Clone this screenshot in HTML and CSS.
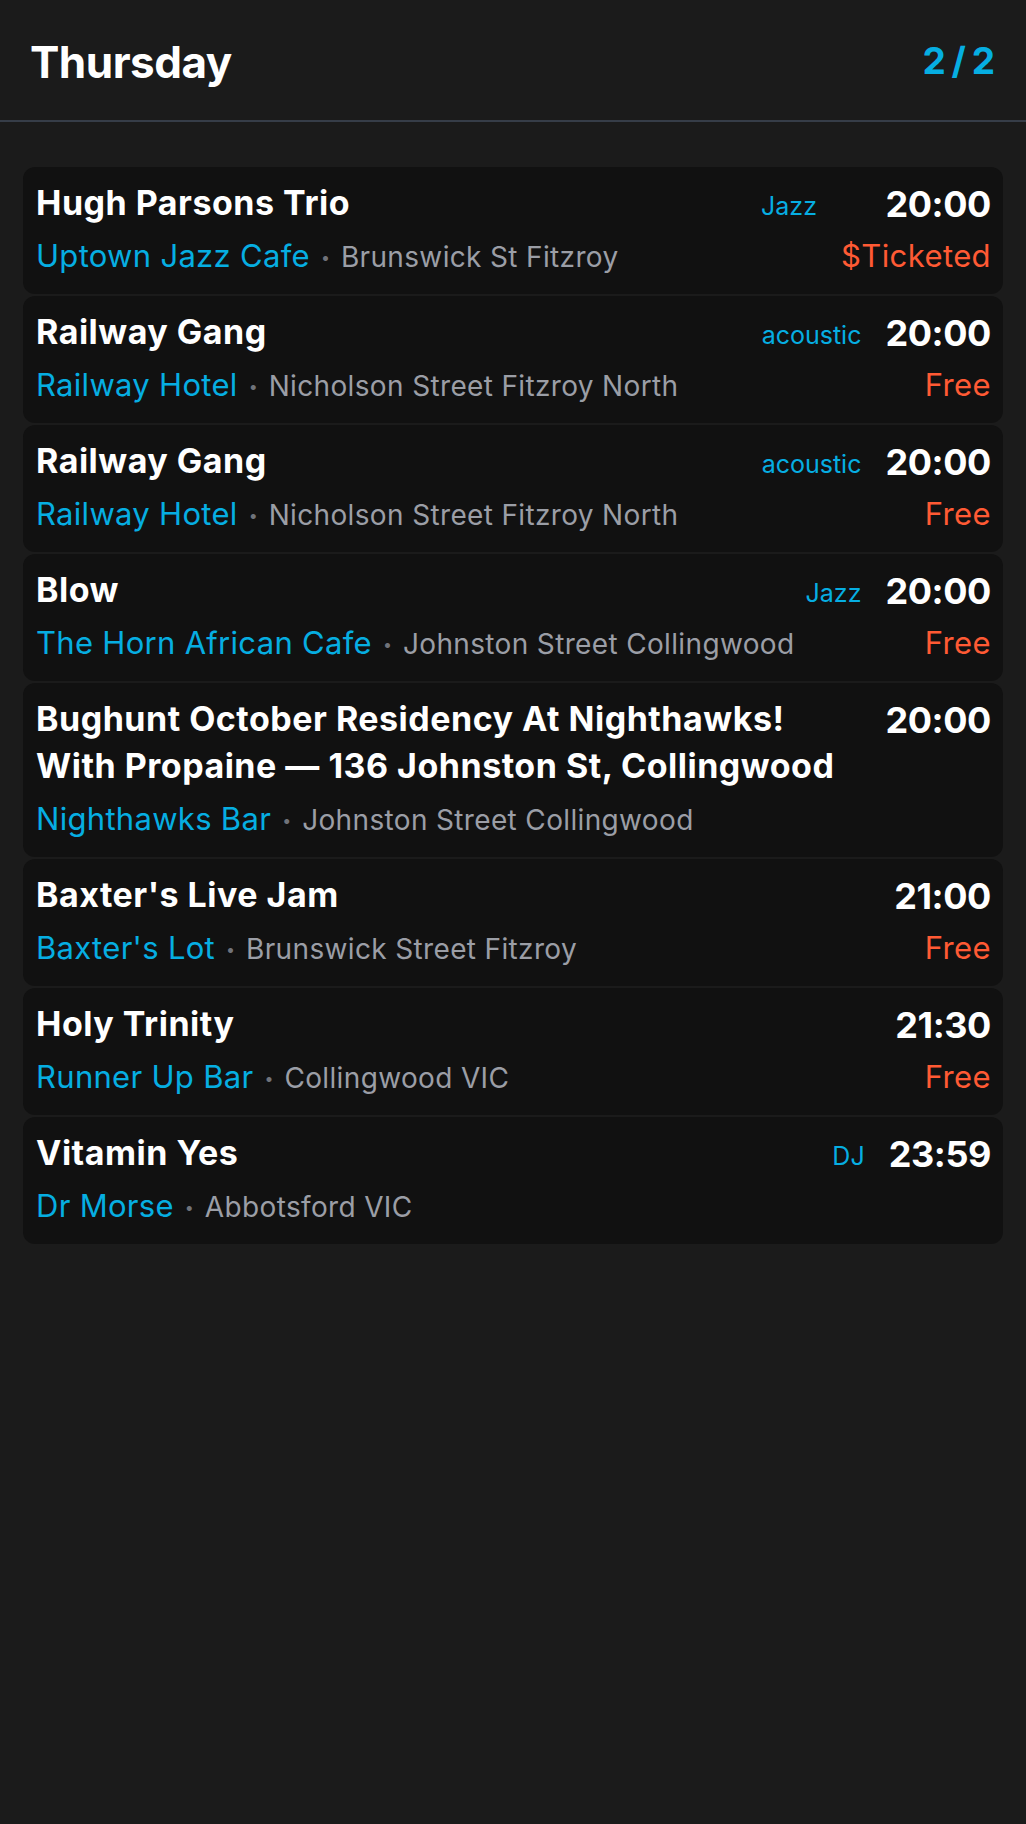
FILE: index.html
```html
<!DOCTYPE html>
<html lang="en">
<head>
<meta charset="utf-8">
<title>Thursday</title>
<link rel="stylesheet" href="styles.css">
</head>
<body>
<header class="top">
  <h1 class="day">Thursday</h1>
  <div class="pager">2 / 2</div>
</header>
<main class="list">
  <article class="card">
    <div class="main">
      <div class="head"><h2 class="title">Hugh Parsons Trio</h2><span class="genre">Jazz</span></div>
      <div class="where"><span class="venue">Uptown Jazz Cafe</span><span class="dot">•</span><span class="addr">Brunswick St Fitzroy</span></div>
    </div>
    <div class="side"><div class="time">20:00</div><div class="price">$Ticketed</div></div>
  </article>
  <article class="card">
    <div class="main">
      <div class="head"><h2 class="title">Railway Gang</h2><span class="genre">acoustic</span></div>
      <div class="where"><span class="venue">Railway Hotel</span><span class="dot">•</span><span class="addr">Nicholson Street Fitzroy North</span></div>
    </div>
    <div class="side"><div class="time">20:00</div><div class="price">Free</div></div>
  </article>
  <article class="card">
    <div class="main">
      <div class="head"><h2 class="title">Railway Gang</h2><span class="genre">acoustic</span></div>
      <div class="where"><span class="venue">Railway Hotel</span><span class="dot">•</span><span class="addr">Nicholson Street Fitzroy North</span></div>
    </div>
    <div class="side"><div class="time">20:00</div><div class="price">Free</div></div>
  </article>
  <article class="card">
    <div class="main">
      <div class="head"><h2 class="title">Blow</h2><span class="genre">Jazz</span></div>
      <div class="where"><span class="venue">The Horn African Cafe</span><span class="dot">•</span><span class="addr">Johnston Street Collingwood</span></div>
    </div>
    <div class="side"><div class="time">20:00</div><div class="price">Free</div></div>
  </article>
  <article class="card">
    <div class="main">
      <div class="head"><h2 class="title">Bughunt October Residency At Nighthawks! With Propaine — 136 Johnston St, Collingwood</h2></div>
      <div class="where"><span class="venue">Nighthawks Bar</span><span class="dot">•</span><span class="addr">Johnston Street Collingwood</span></div>
    </div>
    <div class="side"><div class="time">20:00</div></div>
  </article>
  <article class="card">
    <div class="main">
      <div class="head"><h2 class="title">Baxter's Live Jam</h2></div>
      <div class="where"><span class="venue">Baxter's Lot</span><span class="dot">•</span><span class="addr">Brunswick Street Fitzroy</span></div>
    </div>
    <div class="side"><div class="time">21:00</div><div class="price">Free</div></div>
  </article>
  <article class="card">
    <div class="main">
      <div class="head"><h2 class="title">Holy Trinity</h2></div>
      <div class="where"><span class="venue">Runner Up Bar</span><span class="dot">•</span><span class="addr">Collingwood VIC</span></div>
    </div>
    <div class="side"><div class="time">21:30</div><div class="price">Free</div></div>
  </article>
  <article class="card">
    <div class="main">
      <div class="head"><h2 class="title">Vitamin Yes</h2><span class="genre">DJ</span></div>
      <div class="where"><span class="venue">Dr Morse</span><span class="dot">•</span><span class="addr">Abbotsford VIC</span></div>
    </div>
    <div class="side"><div class="time">23:59</div></div>
  </article>
</main>
</body>
</html>
```

FILE: styles.css
```css
* { box-sizing: border-box; }
html, body {
  margin: 0;
  padding: 0;
  background: #1b1b1b;
  color: #ffffff;
  font-family: Inter, "Noto Sans", "Liberation Sans", sans-serif;
  min-height: 1824px;
}
.top {
  height: 122px;
  display: flex;
  align-items: center;
  justify-content: space-between;
  padding: 4px 31px 0 30px;
  border-bottom: 2px solid #363d48;
}
.day {
  margin: 0;
  font-size: 44px;
  font-weight: 700;
  letter-spacing: -0.5px;
}
.pager {
  font-size: 37px;
  font-weight: 700;
  color: #06aee2;
  margin-top: -4px;
  word-spacing: -3px;
}
.list {
  padding: 45px 23px;
  display: flex;
  flex-direction: column;
  gap: 2px;
}
.card {
  background: #111111;
  border-radius: 12px;
  padding: 12px 12px 20px 13px;
  display: flex;
  align-items: flex-start;
}
.main {
  flex: 1;
  min-width: 0;
}
.head {
  display: flex;
  align-items: baseline;
}
.title {
  margin: 0;
  font-size: 34px;
  line-height: 47px;
  font-weight: 700;
  letter-spacing: 0.5px;
  flex: 1;
}
.genre {
  font-size: 25px;
  color: #06aee2;
  margin-left: 16px;
}
.where {
  margin-top: 12px;
  height: 36px;
  font-size: 31px;
  line-height: 36px;
  white-space: nowrap;
}
.venue {
  color: #06aee2;
  letter-spacing: 0.3px;
}
.dot {
  color: #70737a;
  font-size: 16px;
  line-height: 1;
  margin: 0 11px;
  vertical-align: 4px;
}
.addr {
  color: #9b9ea6;
  font-size: 28px;
  line-height: 1;
  letter-spacing: 0.35px;
}
.side {
  margin-left: 24px;
  padding-top: 2px;
  display: flex;
  flex-direction: column;
  align-items: flex-end;
}
.time {
  font-size: 36px;
  line-height: 47px;
  font-weight: 700;
  letter-spacing: -0.4px;
}
.price {
  margin-top: 10px;
  font-size: 31px;
  line-height: 36px;
  letter-spacing: 0.4px;
  color: #ff5a34;
}
```
